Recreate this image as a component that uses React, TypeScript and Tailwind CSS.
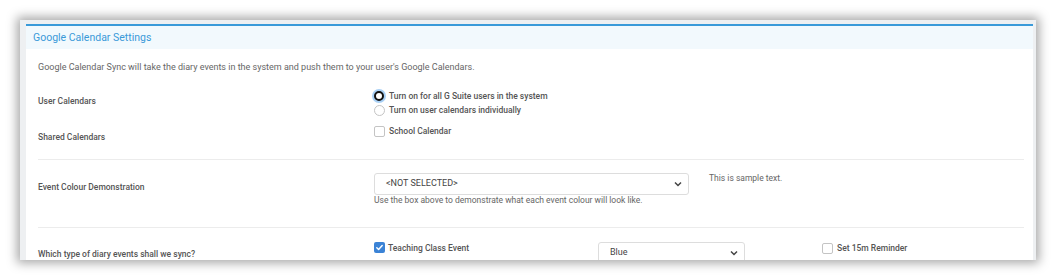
const font = { fontFamily: "Roboto, 'Liberation Sans', sans-serif" };

function Radio({ checked }: { checked?: boolean }) {
  return checked ? (
    <span className="inline-block w-[10px] h-[10px] rounded-full border-2 border-[#111] bg-white shadow-[0_0_0_2px_#a9d0f5] mr-[5px] shrink-0" />
  ) : (
    <span className="inline-block w-[11px] h-[11px] rounded-full border border-[#c4c4c4] bg-white mr-[4px] shrink-0" />
  );
}

function Check({ checked }: { checked?: boolean }) {
  return checked ? (
    <span className="inline-flex items-center justify-center w-[11px] h-[11px] rounded-[2px] bg-[#3b83d6] mr-[3px] shrink-0">
      <svg width="9" height="9" viewBox="0 0 10 10">
        <path d="M2 5.2l2 2 4-4.4" fill="none" stroke="#fff" strokeWidth="1.6" strokeLinecap="round" strokeLinejoin="round" />
      </svg>
    </span>
  ) : (
    <span className="inline-block w-[11px] h-[11px] rounded-[2px] border border-[#c4c4c4] bg-white mr-[4px] shrink-0" />
  );
}

function Chevron() {
  return (
    <svg width="8" height="6" viewBox="0 0 8 6">
      <path d="M1 1.5l3 3 3-3" fill="none" stroke="#444" strokeWidth="1.5" />
    </svg>
  );
}

export default function App() {
  return (
    <div className="w-[1057px] h-[280px] bg-white pt-[20px] pl-[20px] overflow-hidden" style={font}>
      <div className="w-[1016px] h-[240px] bg-[#eef0f2] pl-[6px] pt-[4px] pr-[3px] shadow-[0_0_10px_3px_rgba(0,0,0,0.35)] overflow-hidden">
        <div className="h-full bg-white border-t-2 border-[#3a9ad9]">
          <div className="h-[23px] bg-[#f2f9fd] pl-[7px] flex items-center text-[10.5px] text-[#3a9ad9]">
            Google Calendar Settings
          </div>
          <div className="pl-[12px] pr-[9px] text-[8.5px] text-[#666]">
            <p className="mt-[11px] leading-[14px] text-[9px]">
              Google Calendar Sync will take the diary events in the system and push them to your user's Google Calendars.
            </p>

            <div className="flex mt-[15px]">
              <div className="w-[336px] pt-[5px] leading-[14px] font-medium text-[#555]">User Calendars</div>
              <div className="font-medium text-[#555]">
                <div className="flex items-center h-[14px]">
                  <Radio checked />
                  Turn on for all G Suite users in the system
                </div>
                <div className="flex items-center h-[14px]">
                  <Radio />
                  Turn on user calendars individually
                </div>
              </div>
            </div>

            <div className="flex mt-[7px]">
              <div className="w-[336px] pt-[6px] leading-[14px] font-medium text-[#555]">Shared Calendars</div>
              <div className="flex items-center h-[14px] font-medium text-[#555]">
                <Check />
                School Calendar
              </div>
            </div>

            <div className="border-t border-[#ececec] mt-[15px]" />

            <div className="flex mt-[13px]">
              <div className="w-[336px] pt-[7px] leading-[14px] font-medium text-[#555]">Event Colour Demonstration</div>
              <div className="w-[315px]">
                <div className="h-[22px] border border-[#ddd] rounded-[3px] flex items-center justify-between pl-[11px] pr-[6px] text-[9px] text-[#444]">
                  <span>&lt;NOT SELECTED&gt;</span>
                  <Chevron />
                </div>
                <div className="leading-[14px] mt-[-2px]">Use the box above to demonstrate what each event colour will look like.</div>
              </div>
              <div className="ml-[20px] leading-[14px] mt-[-2px]">This is sample text.</div>
            </div>

            <div className="border-t border-[#ececec] mt-[20px]" />

            <div className="flex mt-[14px]">
              <div className="w-[336px] pt-[5px] leading-[14px] font-medium text-[#555]">Which type of diary events shall we sync?</div>
              <div className="w-[224px] flex items-start font-medium text-[#555]">
                <Check checked />
                <span className="leading-[12px]">Teaching Class Event</span>
              </div>
              <div className="w-[224px]">
                <div className="w-[147px] h-[22px] border border-[#ddd] rounded-[3px] flex items-center justify-between pl-[11px] pr-[6px] text-[9px] text-[#444]">
                  <span>Blue</span>
                  <Chevron />
                </div>
              </div>
              <div className="flex items-center h-[12px] font-medium text-[#555]">
                <Check />
                Set 15m Reminder
              </div>
            </div>
          </div>
        </div>
      </div>
    </div>
  );
}
